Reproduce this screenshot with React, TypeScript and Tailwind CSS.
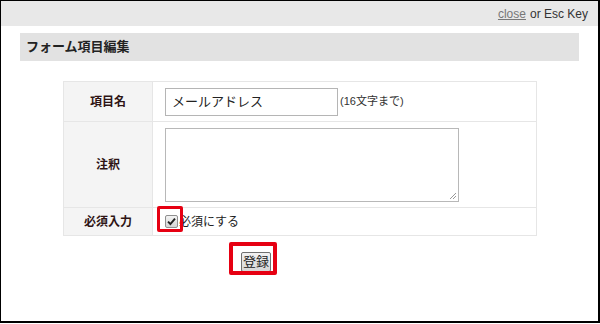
import React from "react";

const jp = '"Liberation Sans", "Noto Sans CJK JP", sans-serif';

function CheckBox() {
  return (
    <span className="inline-flex h-[13px] w-[13px] items-center justify-center rounded-[2px] border border-[#8f8f8f] bg-gradient-to-b from-[#f4f4f4] to-[#d4d4d4]">
      <svg width="9" height="9" viewBox="0 0 9 9">
        <path d="M1 4.6 L3.4 7 L8 1.6" fill="none" stroke="#222" strokeWidth="1.9" />
      </svg>
    </span>
  );
}

export default function App() {
  return (
    <div className="relative h-[324px] w-[600px] bg-white" style={{ fontFamily: jp }}>
      <div className="h-[323px] w-[600px] border-b-2 border-l border-r-2 border-t border-black bg-white">
        {/* top bar */}
        <div className="flex h-[25px] items-center justify-end bg-[#e8e8e8] pr-[10px] text-[12px] text-[#333]">
          <span className="text-[#777] underline">close</span>
          <span className="ml-[4px]">or Esc Key</span>
        </div>

        <div className="px-[19px] pt-[7px]">
          {/* heading */}
          <div className="flex h-[28px] items-center bg-[#e2e2e2] pl-[6px] text-[13px] font-bold text-[#222]">
            フォーム項目編集
          </div>

          {/* form table */}
          <table className="ml-[43px] mt-[20px] w-[474px] border-collapse text-[12px] text-[#333]">
            <tbody>
              <tr className="h-[40px]">
                <th className="w-[89px] border border-[#e6e6e6] bg-[#f4f4f4] font-bold text-[#2e1414]">項目名</th>
                <td className="border border-[#e6e6e6] pl-[12px]">
                  <div className="flex items-center">
                    <div className="flex h-[28px] w-[173px] items-center border border-[#b5b5b5] pl-[6px] text-[13px] text-[#222]">
                      メールアドレス
                    </div>
                    <span className="ml-[2px] text-[11px]">(16文字まで)</span>
                  </div>
                </td>
              </tr>
              <tr className="h-[86px]">
                <th className="border border-[#e6e6e6] bg-[#f4f4f4] font-bold text-[#2e1414]">注釈</th>
                <td className="border border-[#e6e6e6] pl-[12px]">
                  <div className="relative h-[74px] w-[294px] border border-[#b8b8b8] bg-white">
                    <svg className="absolute bottom-[1px] right-[1px]" width="8" height="8" viewBox="0 0 8 8">
                      <path d="M7 1 L1 7 M7 4 L4 7" stroke="#999" strokeWidth="1" />
                    </svg>
                  </div>
                </td>
              </tr>
              <tr className="h-[28px]">
                <th className="border border-[#e6e6e6] bg-[#f4f4f4] font-bold text-[#2e1414]">必須入力</th>
                <td className="border border-[#e6e6e6] pl-[12px]">
                  <div className="flex items-center">
                    <CheckBox />
                    <span className="ml-[1px] text-[12px] text-[#222]">必須にする</span>
                  </div>
                </td>
              </tr>
            </tbody>
          </table>

          <div className="ml-[221px] mt-[13px]">
            <button className="rounded-[2px] border border-[#707070] bg-gradient-to-b from-[#f2f2f2] to-[#d6d6d6] px-[1px] py-0 text-[13px] leading-[18px] text-[#222]">
              登録
            </button>
          </div>
        </div>
      </div>

      {/* red annotation boxes */}
      <div className="absolute left-[157px] top-[206px] h-[26px] w-[26px] rounded-[2px] border-[3px] border-[#e60012]" />
      <div className="absolute left-[229px] top-[242px] h-[33px] w-[48px] rounded-[2px] border-[4px] border-[#e60012]" />
    </div>
  );
}
